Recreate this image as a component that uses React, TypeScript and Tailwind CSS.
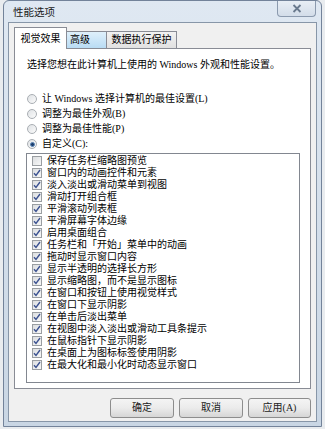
import React from 'react';

const FONT = { fontFamily: '"Liberation Serif", "Noto Sans CJK SC", serif' };

const ITEMS: { label: string; checked: boolean }[] = [
  { label: '保存任务栏缩略图预览', checked: false },
  { label: '窗口内的动画控件和元素', checked: true },
  { label: '淡入淡出或滑动菜单到视图', checked: true },
  { label: '滑动打开组合框', checked: true },
  { label: '平滑滚动列表框', checked: true },
  { label: '平滑屏幕字体边缘', checked: true },
  { label: '启用桌面组合', checked: true },
  { label: '任务栏和「开始」菜单中的动画', checked: true },
  { label: '拖动时显示窗口内容', checked: true },
  { label: '显示半透明的选择长方形', checked: true },
  { label: '显示缩略图，而不是显示图标', checked: true },
  { label: '在窗口和按钮上使用视觉样式', checked: true },
  { label: '在窗口下显示阴影', checked: true },
  { label: '在单击后淡出菜单', checked: true },
  { label: '在视图中淡入淡出或滑动工具条提示', checked: true },
  { label: '在鼠标指针下显示阴影', checked: true },
  { label: '在桌面上为图标标签使用阴影', checked: true },
  { label: '在最大化和最小化时动态显示窗口', checked: true },
];

const RADIOS = [
  { label: '让 Windows 选择计算机的最佳设置(L)', on: false },
  { label: '调整为最佳外观(B)', on: false },
  { label: '调整为最佳性能(P)', on: false },
  { label: '自定义(C):', on: true },
];

const Radio = ({ on }: { on: boolean }) => (
  <span className="w-[10px] h-[10px] rounded-full border border-[#a9aeb3] bg-gradient-to-br from-[#dfe2e5] to-[#fbfbfb] flex items-center justify-center shrink-0">
    {on && <span className="w-[5px] h-[5px] rounded-full bg-[#1d3d6b] border border-[#5b86b8]" />}
  </span>
);

const Check = ({ checked }: { checked: boolean }) => (
  <span className="w-[10px] h-[10px] border border-[#9a9ea2] bg-gradient-to-br from-[#dcdee0] to-[#f7f7f7] flex items-center justify-center shrink-0">
    {checked && (
      <svg width="8" height="8" viewBox="0 0 8 8">
        <path d="M1 4.2 L3 6.5 L7 1" fill="none" stroke="#3c5291" strokeWidth="1.4" />
      </svg>
    )}
  </span>
);

const Button = ({ label, w }: { label: string; w: string }) => (
  <button
    className={`${w} h-[20px] rounded-[3px] border border-[#8d8d8d] bg-gradient-to-b from-[#f4f4f4] via-[#ebebeb] to-[#d6d6d6] text-[10px] text-[#222] leading-none`}
  >
    {label}
  </button>
);

export default function App() {
  return (
    <div className="w-[325px] h-[429px] bg-[#e9ecef] text-black" style={FONT}>
      <div className="ml-[3px] w-[319px] h-[427px] rounded-t-[6px] border border-[#73839a] bg-gradient-to-b from-[#dfe8f2] to-[#c9d6e4] px-[4px] pb-[4px] flex flex-col">
        {/* title bar */}
        <div className="h-[21px] flex items-start justify-between shrink-0">
          <span className="pl-[5px] pt-[7px] text-[10.5px] leading-none text-[#1a1a1a]">性能选项</span>
          <span className="mr-[1px] w-[39px] h-[16px] rounded-b-[4px] border border-t-0 border-[#8b9aae] bg-gradient-to-b from-[#e8eef5] to-[#d3dde9] flex items-center justify-center">
            <svg width="10" height="9" viewBox="0 0 10 9">
              <path d="M1.5 1 L8.5 8 M8.5 1 L1.5 8" stroke="#6a7a8e" strokeWidth="1.8" />
            </svg>
          </span>
        </div>

        {/* client */}
        <div className="flex-1 bg-[#f0f0f0] border border-[#8796a8] px-[5px] pt-[3px] flex flex-col">
          {/* tabs */}
          <div className="flex items-end h-[22px] text-[10px] leading-none">
            <div className="w-[53px] h-[22px] bg-white border border-b-0 border-[#898c95] flex items-center justify-center relative top-[1px] z-10">
              视觉效果
            </div>
            <div className="w-[40px] h-[17px] border border-l-0 border-b-0 border-[#898c95] bg-gradient-to-b from-[#dff0fb] to-[#b9dcf4] flex items-center pl-[3px]">
              高级
            </div>
            <div className="w-[70px] h-[17px] border border-l-0 border-b-0 border-[#898c95] bg-gradient-to-b from-[#f2f2f2] to-[#e1e1e1] flex items-center justify-center">
              数据执行保护
            </div>
          </div>

          {/* panel */}
          <div className="w-[297px] h-[341px] bg-white border border-[#898c95] pt-[11px] px-[11px] flex flex-col">
            <div className="text-[10px] leading-none pl-[1px]">选择您想在此计算机上使用的 Windows 外观和性能设置。</div>

            <div className="mt-[24px] flex flex-col gap-[5px] text-[10px] leading-none pl-[1px]">
              {RADIOS.map((r) => (
                <div key={r.label} className="flex items-center gap-[5px] h-[10px]">
                  <Radio on={r.on} />
                  <span>{r.label}</span>
                </div>
              ))}
            </div>

            <div className="mt-[4px] w-[274px] h-[230px] border border-[#828790] pt-[1px] pl-[5px] flex flex-col text-[10px] leading-none">
              {ITEMS.map((it) => (
                <div key={it.label} className="h-[12px] flex items-center gap-[5px]">
                  <Check checked={it.checked} />
                  <span>{it.label}</span>
                </div>
              ))}
            </div>
          </div>

          {/* buttons */}
          <div className="mt-[9px] flex justify-end gap-[5px]">
            <Button label="确定" w="w-[64px]" />
            <Button label="取消" w="w-[64px]" />
            <Button label="应用(A)" w="w-[63px]" />
          </div>
        </div>
      </div>
    </div>
  );
}
